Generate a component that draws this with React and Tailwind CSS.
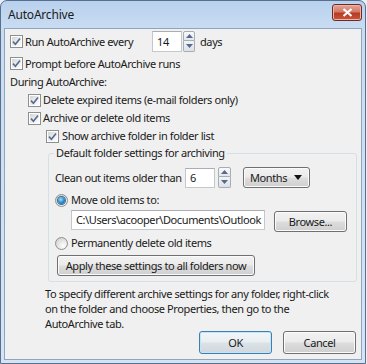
import React from 'react'

const btnFace =
  'border border-[#707070] rounded-[3px] bg-[linear-gradient(to_bottom,#f2f2f2,#ebebeb_48%,#dddddd_52%,#cfcfcf)] shadow-[inset_0_0_0_1px_#fbfbfb]'

const field = 'bg-white border border-[#c4c8ce] border-t-[#abadb3]'

function Check() {
  return (
    <span className="w-[13px] h-[13px] shrink-0 flex border border-[#8e8f8f] bg-white p-[1px]">
      <span className="flex-1 flex items-center justify-center bg-[linear-gradient(135deg,#d4d4d4,#eeeeee_55%,#fbfbfb)]">
        <svg width="9" height="9" viewBox="0 0 9 9">
          <path d="M1 4.6 L3.4 7.2 L8 1.4" fill="none" stroke="#566a92" strokeWidth="1.6" />
        </svg>
      </span>
    </span>
  )
}

function Radio({ on }) {
  return (
    <span className="w-[13px] h-[13px] shrink-0 rounded-full flex items-center justify-center border border-[#8e8f8f] bg-[radial-gradient(circle_at_65%_70%,#ffffff,#e6e6e6_45%,#c9c9c9)]">
      {on && (
        <span className="w-[7px] h-[7px] rounded-full bg-[radial-gradient(circle_at_40%_35%,#9ee0fb,#2a86c4_55%,#1b4f82)] shadow-[0_0_0_1px_#356f9d]" />
      )}
    </span>
  )
}

function Arrow({ up }) {
  return (
    <svg width="7" height="4" viewBox="0 0 7 4">
      <path d={up ? 'M0 4 L3.5 0 L7 4 Z' : 'M0 0 L3.5 4 L7 0 Z'} fill="#56698f" />
    </svg>
  )
}

function Spin({ w }) {
  return (
    <div className={`${w} h-[21px] flex flex-col shrink-0`}>
      <span className="h-[10px] flex items-center justify-center border border-[#a7adb5] rounded-t-[2px] bg-[linear-gradient(to_bottom,#fafafa,#e3e6ea)]">
        <Arrow up />
      </span>
      <span className="h-[11px] flex items-center justify-center border border-t-0 border-[#a7adb5] rounded-b-[2px] bg-[linear-gradient(to_bottom,#f2f3f5,#dde1e6)]">
        <Arrow />
      </span>
    </div>
  )
}

function Row({ pl, children, h = 'h-[18px]' }) {
  return <div className={`flex items-center ${h} ${pl}`}>{children}</div>
}

export default function App() {
  return (
    <div className="w-[367px] h-[364px] bg-[#e9eef5] font-['Noto_Sans',sans-serif] text-[11px] tracking-[-0.4px] text-[#1a1a1a] leading-[16px] whitespace-nowrap">
      <div className="w-[366px] h-[364px] flex flex-col rounded-t-[7px] border border-[#586f8d] px-[3px] pb-[3px] bg-[linear-gradient(to_bottom,#b9d1ee,#c9dcf2_28px,#d5e4f5)]">
        {/* title bar */}
        <div className="h-[27px] shrink-0 flex items-center justify-between pl-[4px]">
          <span className="text-[12px] text-[#1b1b1b] tracking-[-0.2px]">AutoArchive</span>
          <span className="w-[30px] h-[17px] mb-[4px] flex items-center justify-center rounded-[3px] border border-[#6d2a24] bg-[linear-gradient(to_bottom,#e6a598,#d27a68_45%,#b93a22_55%,#c7563c)] shadow-[inset_0_0_0_1px_#f0b4a6]">
            <svg width="11" height="9" viewBox="0 0 11 9">
              <path d="M1.5 1 L9.5 8 M9.5 1 L1.5 8" stroke="#fff" strokeWidth="2.2" />
            </svg>
          </span>
        </div>

        {/* client area */}
        <div className="flex-1 flex flex-col border border-[#8ea4bf] bg-[#f0f0f0] pt-[2px]">
          <div className="flex items-center h-[21px] pl-[5px]">
            <Check />
            <span className="w-[127px] ml-[2px]">Run AutoArchive every</span>
            <div className={`w-[30px] h-[21px] flex items-center pl-[4px] ${field}`}>14</div>
            <span className="ml-[1px]"><Spin w="w-[12px]" /></span>
            <span className="ml-[5px]">days</span>
          </div>
          <Row pl="pl-[5px] mt-[3px]" h="h-[17px]">
            <Check />
            <span className="ml-[2px]">Prompt before AutoArchive runs</span>
          </Row>
          <Row pl="pl-[5px] mt-[1px]">
            <span>During AutoArchive:</span>
          </Row>
          <Row pl="pl-[23px]">
            <Check />
            <span className="ml-[2px]">Delete expired items (e-mail folders only)</span>
          </Row>
          <Row pl="pl-[23px]">
            <Check />
            <span className="ml-[2px]">Archive or delete old items</span>
          </Row>
          <Row pl="pl-[41px]">
            <Check />
            <span className="ml-[3px]">Show archive folder in folder list</span>
          </Row>

          <fieldset className="ml-[43px] mr-[4px] border border-[#d5dfe5] rounded-[3px] pl-[5px] pb-[5px]">
            <legend className="px-[2px]">Default folder settings for archiving</legend>
            <div className="flex items-center h-[21px] mt-[6px] pl-[1px]">
              <span className="w-[130px]">Clean out items older than</span>
              <div className={`w-[30px] h-[20px] flex items-center pl-[4px] ${field}`}>6</div>
              <span className="ml-[3px]"><Spin w="w-[13px]" /></span>
              <div className={`ml-[12px] w-[67px] h-[21px] flex items-center justify-between pl-[6px] pr-[7px] ${btnFace}`}>
                <span>Months</span>
                <svg width="8" height="5" viewBox="0 0 8 5">
                  <path d="M0 0 L8 0 L4 5 Z" fill="#111" />
                </svg>
              </div>
            </div>
            <div className="flex items-center h-[16px] mt-[4px] pl-[1px]">
              <Radio on />
              <span className="ml-[3px]">Move old items to:</span>
            </div>
            <div className="flex items-start mt-[2px] pl-[17px]">
              <div className={`w-[194px] h-[20px] flex items-center pl-[4px] ${field}`}>
                C:\Users\acooper\Documents\Outlook
              </div>
              <button className={`ml-[9px] mt-[1px] w-[73px] h-[21px] text-center ${btnFace}`}>Browse...</button>
            </div>
            <div className="flex items-center h-[16px] mt-[3px] pl-[1px]">
              <Radio />
              <span className="ml-[3px]">Permanently delete old items</span>
            </div>
            <button className={`block mt-[4px] ml-[3px] w-[198px] h-[21px] text-center ${btnFace}`}>
              Apply these settings to all folders now
            </button>
          </fieldset>

          <p className="ml-[40px] mt-[4px] leading-[15px]">
            To specify different archive settings for any folder, right-click
            <br />
            on the folder and choose Properties, then go to the
            <br />
            AutoArchive tab.
          </p>

          <div className="flex justify-end gap-[11px] pr-[5px]">
            <button className="w-[73px] h-[23px] rounded-[3px] border border-[#3c7fb1] bg-[linear-gradient(to_bottom,#f3f6f8,#e9eef1_48%,#dbe2e7_52%,#d0d8de)] shadow-[inset_0_0_0_1px_#c5e5f7]">
              OK
            </button>
            <button className={`w-[73px] h-[23px] ${btnFace}`}>Cancel</button>
          </div>
        </div>
      </div>
    </div>
  )
}
